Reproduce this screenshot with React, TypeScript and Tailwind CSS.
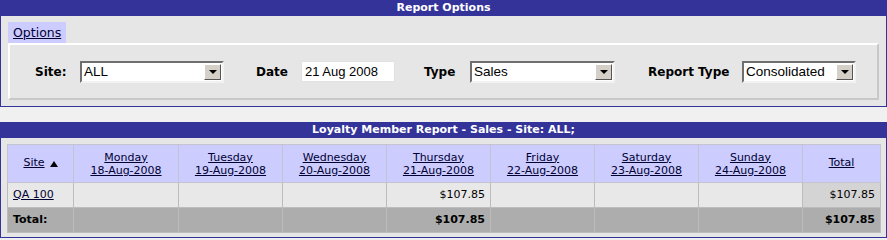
import React from "react";

const days = [
  { day: "Monday", date: "18-Aug-2008", amount: "" },
  { day: "Tuesday", date: "19-Aug-2008", amount: "" },
  { day: "Wednesday", date: "20-Aug-2008", amount: "" },
  { day: "Thursday", date: "21-Aug-2008", amount: "$107.85" },
  { day: "Friday", date: "22-Aug-2008", amount: "" },
  { day: "Saturday", date: "23-Aug-2008", amount: "" },
  { day: "Sunday", date: "24-Aug-2008", amount: "" },
];

const FakeSelect = ({ value, width }: { value: string; width: string }) => (
  <div
    className={`${width} h-[22px] bg-white flex items-center border-2 border-t-[#6f6f6f] border-l-[#6f6f6f] border-b-[#f2f2f2] border-r-[#f2f2f2]`}
  >
    <span className="flex-1 pl-[2px] text-[13.5px] leading-none text-black font-['Liberation_Sans',Arial,sans-serif]">
      {value}
    </span>
    <span className="w-[17px] h-[16px] mr-[1px] bg-[#d4d0c8] border border-t-white border-l-white border-b-[#555] border-r-[#555] flex items-center justify-center">
      <span className="w-0 h-0 border-t-[4px] border-x-[4px] border-t-black border-x-transparent" />
    </span>
  </div>
);

export default function App() {
  return (
    <div className="w-[887px] h-[240px] bg-[#f0f0f0] font-['DejaVu_Sans',Verdana,sans-serif] text-black overflow-hidden">
      {/* Report options panel */}
      <div className="w-[887px] border-x border-b border-[#333399] bg-[#e6e6e6]">
        <div className="h-[16px] bg-[#333399] text-white font-bold text-[11px] leading-[16px] text-center">
          Report Options
        </div>
        <div className="px-[7px] py-[6px]">
          <div className="flex">
            <div className="h-[21px] px-[5px] bg-[#ccccff] text-[12.5px] leading-[21px]">
              <a className="underline text-[#000033]">Options</a>
            </div>
          </div>
          <div className="h-[57px] flex items-center border-2 border-t-white border-l-white border-b-[#c8c8c8] border-r-[#c8c8c8] pl-[25px]">
            <span className="w-[45px] text-[12px] font-bold">Site:</span>
            <FakeSelect value="ALL" width="w-[144px]" />
            <span className="w-[77px] pl-[32px] text-[12px] font-bold">Date</span>
            <div className="w-[94px] h-[21px] bg-white border border-[#e2e2e2] flex items-center pl-[3px] text-[13px] font-['Liberation_Sans',Arial,sans-serif]">
              21 Aug 2008
            </div>
            <span className="w-[75px] pl-[29px] text-[12px] font-bold">Type</span>
            <FakeSelect value="Sales" width="w-[145px]" />
            <span className="w-[127px] pl-[33px] text-[12px] font-bold whitespace-nowrap">Report Type</span>
            <FakeSelect value="Consolidated" width="w-[114px]" />
          </div>
        </div>
      </div>

      {/* Loyalty member report panel */}
      <div className="mt-[15px] w-[887px] border-x border-b border-[#333399] bg-[#e6e6e6]">
        <div className="h-[16px] bg-[#333399] text-white font-bold text-[11px] leading-[16px] text-center">
          Loyalty Member Report - Sales - Site: ALL;
        </div>
        <div className="px-[6px] pt-[6px] pb-[4px]">
          <table className="table-fixed border-collapse w-[873px] text-[11px]">
            <colgroup>
              <col className="w-[66px]" />
              <col className="w-[105px]" />
              <col className="w-[104px]" />
              <col className="w-[104px]" />
              <col className="w-[104px]" />
              <col className="w-[104px]" />
              <col className="w-[104px]" />
              <col className="w-[104px]" />
              <col className="w-[78px]" />
            </colgroup>
            <thead>
              <tr>
                <th className="h-[38px] bg-[#ccccff] border border-[#c4c4d0] font-normal text-center">
                  <span className="inline-flex items-center gap-[5px]">
                    <a className="underline text-[#000033]">Site</a>
                    <svg width="8" height="6" viewBox="0 0 8 6">
                      <polygon points="4,0 8,6 0,6" fill="#000" />
                    </svg>
                  </span>
                </th>
                {days.map((d) => (
                  <th
                    key={d.day}
                    className="h-[38px] bg-[#ccccff] border border-[#c4c4d0] font-normal text-center leading-[13px]"
                  >
                    <a className="underline text-[#000033]">
                      {d.day}
                      <br />
                      {d.date}
                    </a>
                  </th>
                ))}
                <th className="h-[38px] bg-[#ccccff] border border-[#c4c4d0] font-normal text-center">
                  <a className="underline text-[#000033]">Total</a>
                </th>
              </tr>
            </thead>
            <tbody>
              <tr>
                <td className="h-[25px] bg-[#e8e8e8] border border-[#bcbcbc] px-[5px]">
                  <a className="underline text-[#000033]">QA 100</a>
                </td>
                {days.map((d) => (
                  <td key={d.day} className="h-[25px] bg-[#e8e8e8] border border-[#bcbcbc] px-[5px] text-right">
                    {d.amount}
                  </td>
                ))}
                <td className="h-[25px] bg-[#d4d4d4] border border-[#bcbcbc] px-[5px] text-right">$107.85</td>
              </tr>
              <tr>
                <td className="h-[25px] bg-[#adadad] border border-[#bcbcbc] px-[5px] font-bold">Total:</td>
                {days.map((d) => (
                  <td
                    key={d.day}
                    className="h-[25px] bg-[#adadad] border border-[#bcbcbc] px-[5px] text-right font-bold"
                  >
                    {d.amount}
                  </td>
                ))}
                <td className="h-[25px] bg-[#adadad] border border-[#bcbcbc] px-[5px] text-right font-bold">
                  $107.85
                </td>
              </tr>
            </tbody>
          </table>
        </div>
      </div>
    </div>
  );
}
